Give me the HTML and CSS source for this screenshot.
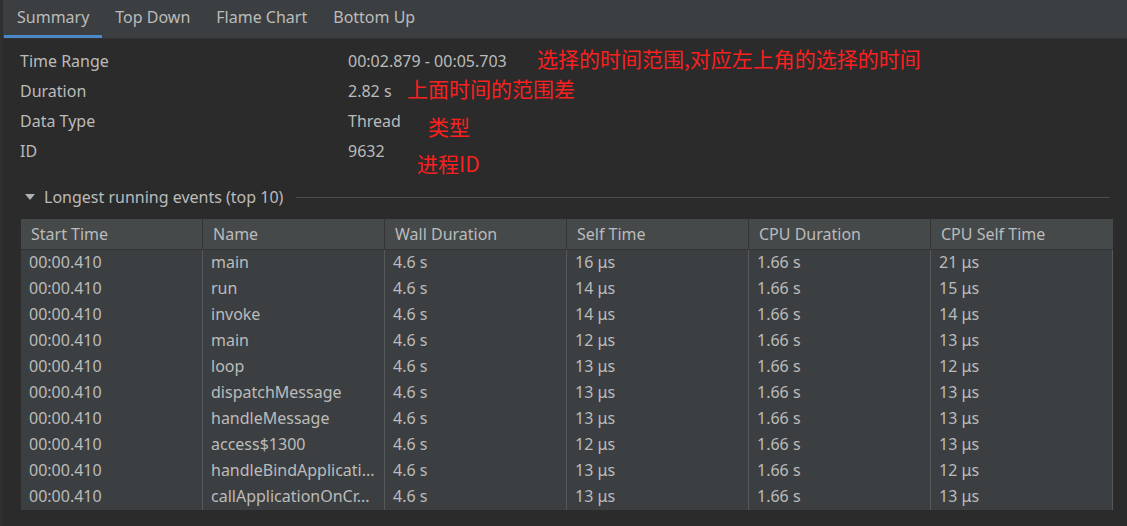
FILE: index.html
```html
<!DOCTYPE html>
<html>
<head>
<meta charset="utf-8">
<link rel="stylesheet" href="styles.css">
</head>
<body>
<div class="app">
  <div class="tabs">
    <div class="tab active">Summary</div>
    <div class="tab">Top Down</div>
    <div class="tab">Flame Chart</div>
    <div class="tab">Bottom Up</div>
  </div>
  <div class="content">
    <div class="info">
      <div class="info-row"><span class="label">Time Range</span><span class="value">00:02.879 - 00:05.703</span></div>
      <div class="info-row"><span class="label">Duration</span><span class="value">2.82 s</span></div>
      <div class="info-row"><span class="label">Data Type</span><span class="value">Thread</span></div>
      <div class="info-row"><span class="label">ID</span><span class="value">9632</span></div>
      <div class="note note1">选择的时间范围,对应左上角的选择的时间</div>
      <div class="note note2">上面时间的范围差</div>
      <div class="note note3">类型</div>
      <div class="note note4">进程ID</div>
    </div>
    <div class="section-head">
      <span class="tri"></span>
      <span class="section-title">Longest running events (top 10)</span>
      <span class="section-line"></span>
    </div>
    <div class="table">
      <div class="thead">
        <div class="th">Start Time</div><div class="th">Name</div><div class="th">Wall Duration</div><div class="th">Self Time</div><div class="th">CPU Duration</div><div class="th">CPU Self Time</div>
      </div>
      <div class="tr"><div class="td">00:00.410</div><div class="td">main</div><div class="td">4.6 s</div><div class="td">16 μs</div><div class="td">1.66 s</div><div class="td">21 μs</div></div>
      <div class="tr"><div class="td">00:00.410</div><div class="td">run</div><div class="td">4.6 s</div><div class="td">14 μs</div><div class="td">1.66 s</div><div class="td">15 μs</div></div>
      <div class="tr"><div class="td">00:00.410</div><div class="td">invoke</div><div class="td">4.6 s</div><div class="td">14 μs</div><div class="td">1.66 s</div><div class="td">14 μs</div></div>
      <div class="tr"><div class="td">00:00.410</div><div class="td">main</div><div class="td">4.6 s</div><div class="td">12 μs</div><div class="td">1.66 s</div><div class="td">13 μs</div></div>
      <div class="tr"><div class="td">00:00.410</div><div class="td">loop</div><div class="td">4.6 s</div><div class="td">13 μs</div><div class="td">1.66 s</div><div class="td">12 μs</div></div>
      <div class="tr"><div class="td">00:00.410</div><div class="td">dispatchMessage</div><div class="td">4.6 s</div><div class="td">13 μs</div><div class="td">1.66 s</div><div class="td">13 μs</div></div>
      <div class="tr"><div class="td">00:00.410</div><div class="td">handleMessage</div><div class="td">4.6 s</div><div class="td">13 μs</div><div class="td">1.66 s</div><div class="td">13 μs</div></div>
      <div class="tr"><div class="td">00:00.410</div><div class="td">access$1300</div><div class="td">4.6 s</div><div class="td">12 μs</div><div class="td">1.66 s</div><div class="td">13 μs</div></div>
      <div class="tr"><div class="td">00:00.410</div><div class="td">handleBindApplicati...</div><div class="td">4.6 s</div><div class="td">13 μs</div><div class="td">1.66 s</div><div class="td">12 μs</div></div>
      <div class="tr"><div class="td">00:00.410</div><div class="td">callApplicationOnCr...</div><div class="td">4.6 s</div><div class="td">13 μs</div><div class="td">1.66 s</div><div class="td">13 μs</div></div>
    </div>
  </div>
</div>
</body>
</html>
```
FILE: styles.css
```css
* { box-sizing: border-box; }
html, body {
  margin: 0;
  padding: 0;
  background: #2b2b2b;
  width: 1127px;
  height: 526px;
  overflow: hidden;
}
body {
  font-family: "Noto Sans", "Noto Sans CJK SC", sans-serif;
  font-size: 16px;
  color: #bbbbbb;
}
.app {
  height: 526px;
  border-left: 3px solid #2f3031;
  background: #2b2b2b;
}
.tabs {
  display: flex;
  height: 39px;
  background: #3c3f41;
  border-bottom: 1px solid #323232;
  padding-left: 1px;
}
.tab {
  padding: 0 13px;
  height: 38px;
  line-height: 34px;
  color: #bbbbbb;
  white-space: nowrap;
}
.tab.active {
  border-bottom: 3px solid #4a88c7;
}
.content {
  padding: 0 14px 0 17px;
}
.info {
  position: relative;
  padding-top: 7px;
  height: 143px;
}
.info-row {
  display: flex;
  height: 30px;
  line-height: 30px;
}
.label { width: 328px; white-space: nowrap; }
.value { color: #bbbbbb; white-space: nowrap; }
.note {
  position: absolute;
  color: #fa2020;
  font-family: "Noto Sans CJK SC", sans-serif;
  font-size: 21px;
  line-height: 24px;
  white-space: nowrap;
}
.note1 { left: 517px; top: 7px; }
.note2 { left: 387px; top: 37px; }
.note3 { left: 408px; top: 75px; }
.note4 { left: 397px; top: 112px; }
.section-head {
  display: flex;
  align-items: center;
  height: 30px;
  margin-left: 5px;
}
.tri {
  width: 0;
  height: 0;
  border-left: 5px solid transparent;
  border-right: 5px solid transparent;
  border-top: 6px solid #aeb0b1;
  margin-right: 9px;
}
.section-title { white-space: nowrap; }
.section-line {
  flex: 1;
  height: 1px;
  background: #4b4d4f;
  margin-left: 13px;
  margin-right: 3px;
}
.table {
  margin-top: 7px;
  width: 1092px;
  margin-left: 1px;
  background: #3c3f41;
}
.thead, .tr {
  display: grid;
  grid-template-columns: 182px 182px 182px 182px 182px 182px;
}
.thead {
  height: 31px;
  background: #45494a;
  border-bottom: 1px solid #333537;
}
.th {
  padding-left: 10px;
  line-height: 30px;
  border-right: 1px solid #333537;
  white-space: nowrap;
  overflow: hidden;
}
.th:last-child { border-right: none; }
.tr { height: 26px; }
.td {
  padding-left: 8px;
  line-height: 25px;
  border-right: 1px solid #55595c;
  white-space: nowrap;
  overflow: hidden;
}
.td:last-child { border-right: 1px solid #55595c; }
```
